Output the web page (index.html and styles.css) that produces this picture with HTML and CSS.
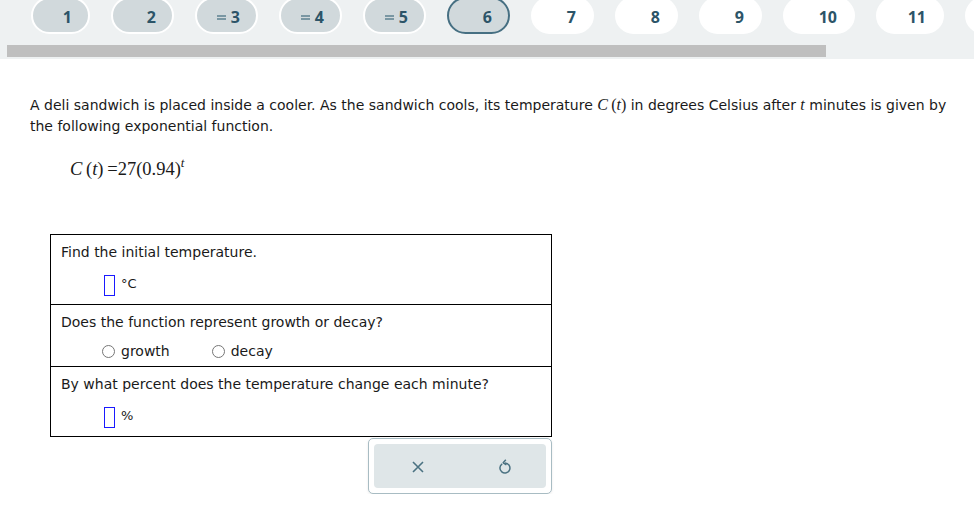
FILE: index.html
```html
<!DOCTYPE html>
<html>
<head>
<meta charset="utf-8">
<link rel="stylesheet" href="styles.css">
</head>
<body>
<header class="topbar">
  <nav class="pills">
    <span class="pill done narrow">1</span>
    <span class="pill done">2</span>
    <span class="pill done"><span class="eq"></span>3</span>
    <span class="pill done"><span class="eq"></span>4</span>
    <span class="pill done"><span class="eq"></span>5</span>
    <span class="pill current">6</span>
    <span class="pill">7</span>
    <span class="pill">8</span>
    <span class="pill">9</span>
    <span class="pill wide">10</span>
    <span class="pill mid">11</span>
    <span class="pill"></span>
  </nav>
  <div class="scroll"></div>
</header>
<main class="content">
  <p class="intro">A deli sandwich is placed inside a cooler. As the sandwich cools, its temperature <span class="m"><i>C</i>&thinsp;(<i>t</i>)</span> in degrees Celsius after <span class="m"><i>t</i></span> minutes is given by the following exponential function.</p>
  <div class="formula"><i>C</i>&thinsp;(<i>t</i>)&thinsp;=27(0.94)<sup><i>t</i></sup></div>
  <table class="qs">
    <tr><td>
      <div class="q">Find the initial temperature.</div>
      <div class="ans"><span class="box"></span><span class="unit">°C</span></div>
    </td></tr>
    <tr><td>
      <div class="q">Does the function represent growth or decay?</div>
      <div class="radios">
        <label class="opt"><span class="radio"></span>growth</label>
        <label class="opt"><span class="radio"></span>decay</label>
      </div>
    </td></tr>
    <tr><td>
      <div class="q">By what percent does the temperature change each minute?</div>
      <div class="ans"><span class="box"></span><span class="unit">%</span></div>
    </td></tr>
  </table>
  <div class="actions">
    <div class="actions-inner">
      <svg width="14" height="14" viewBox="0 0 14 14"><path d="M2 2 L12 12 M12 2 L2 12" stroke="#4b7282" stroke-width="1.6" fill="none"/></svg>
      <svg width="14" height="16" viewBox="0 0 14 16"><path d="M4.2 4.8 A5 5 0 1 0 7 4" stroke="#4b7282" stroke-width="1.5" fill="none"/><path d="M7.8 0.8 L5.2 3.8 L8.4 5.8" stroke="#4b7282" stroke-width="1.5" fill="none" stroke-linejoin="round"/></svg>
    </div>
  </div>
</main>
</body>
</html>
```
FILE: styles.css
```css
* { box-sizing: border-box; }
body {
  margin: 0;
  background: #fff;
  font-family: "DejaVu Sans", Verdana, sans-serif;
  color: #1a1a1a;
  overflow: hidden;
}
.topbar {
  background: #eef1f2;
  height: 62px;
}
.pills {
  display: flex;
  gap: 21px;
  padding-left: 31px;
  margin-top: -3px;
  height: 37px;
  white-space: nowrap;
  overflow: hidden;
}
.pill {
  flex: none;
  display: inline-flex;
  align-items: center;
  justify-content: flex-end;
  width: 63px;
  height: 37px;
  padding: 3px 16px 0 0;
  border: 2px solid #fff;
  border-radius: 19px;
  background: #fff;
  font-family: "Open Sans", "Liberation Sans", sans-serif;
  font-weight: 700;
  font-size: 16px;
  color: #2c5468;
}
.pill.narrow { width: 59px; }
.pill.wide { width: 72px; }
.pill.mid { width: 68px; }
.pill.done { background: #d1d9dc; }
.pill.current { background: #d1d9dc; border-color: #466f82; }
.eq {
  display: inline-block;
  width: 9px;
  height: 5px;
  margin-right: 5px;
  margin-top: 1px;
  border-top: 2px solid #7a97a3;
  border-bottom: 2px solid #7a97a3;
}
.scroll {
  margin: 11px 0 0 7px;
  width: 819px;
  height: 12px;
  background: #bfbfbf;
}
.content {
  padding: 0 0 0 30px;
}
.intro {
  margin: 36px 0 0 0;
  width: 935px;
  font-size: 14px;
  line-height: 21px;
}
.m {
  font-family: "Liberation Serif", serif;
  font-size: 16px;
  line-height: 14px;
}
.formula {
  margin: 19px 0 0 40px;
  font-family: "Liberation Serif", serif;
  font-size: 18.5px;
  height: 26px;
  line-height: 26px;
}
.formula sup { font-size: 13px; vertical-align: 8px; line-height: 0; }
.qs {
  margin: 52px 0 0 20px;
  width: 502px;
  border-collapse: collapse;
  font-size: 14px;
}
.qs td {
  border: 1px solid #000;
  padding: 8px 10px 8px 10px;
  vertical-align: top;
}
.q { line-height: 18px; height: 18px; }
.ans {
  display: flex;
  align-items: center;
  margin-top: 14px;
  height: 21px;
  padding-left: 43px;
}
.box {
  display: inline-block;
  width: 11px;
  height: 21px;
  border: 1.5px solid #1a1aff;
}
.unit { margin-left: 6px; font-size: 13px; margin-top: -5px; }
.radios {
  display: flex;
  align-items: center;
  margin-top: 12px;
  height: 16px;
  padding-left: 41px;
  margin-bottom: -1px;
}
.opt { display: inline-flex; align-items: center; margin-right: 42px; }
.radio {
  display: inline-block;
  width: 13px;
  height: 13px;
  border: 1px solid #767676;
  border-radius: 50%;
  margin-right: 6px;
}
.actions {
  margin: 1px 0 0 338px;
  width: 184px;
  height: 56px;
  border: 1px solid #a8bcc3;
  border-radius: 5px;
  padding: 5px;
  background: #fff;
  box-shadow: 0 1px 3px rgba(0,0,0,0.08);
}
.actions-inner {
  height: 44px;
  background: #dfe6e8;
  border-radius: 4px;
  display: flex;
  align-items: center;
  justify-content: space-between;
  padding: 2px 34px 0 37px;
}
```
